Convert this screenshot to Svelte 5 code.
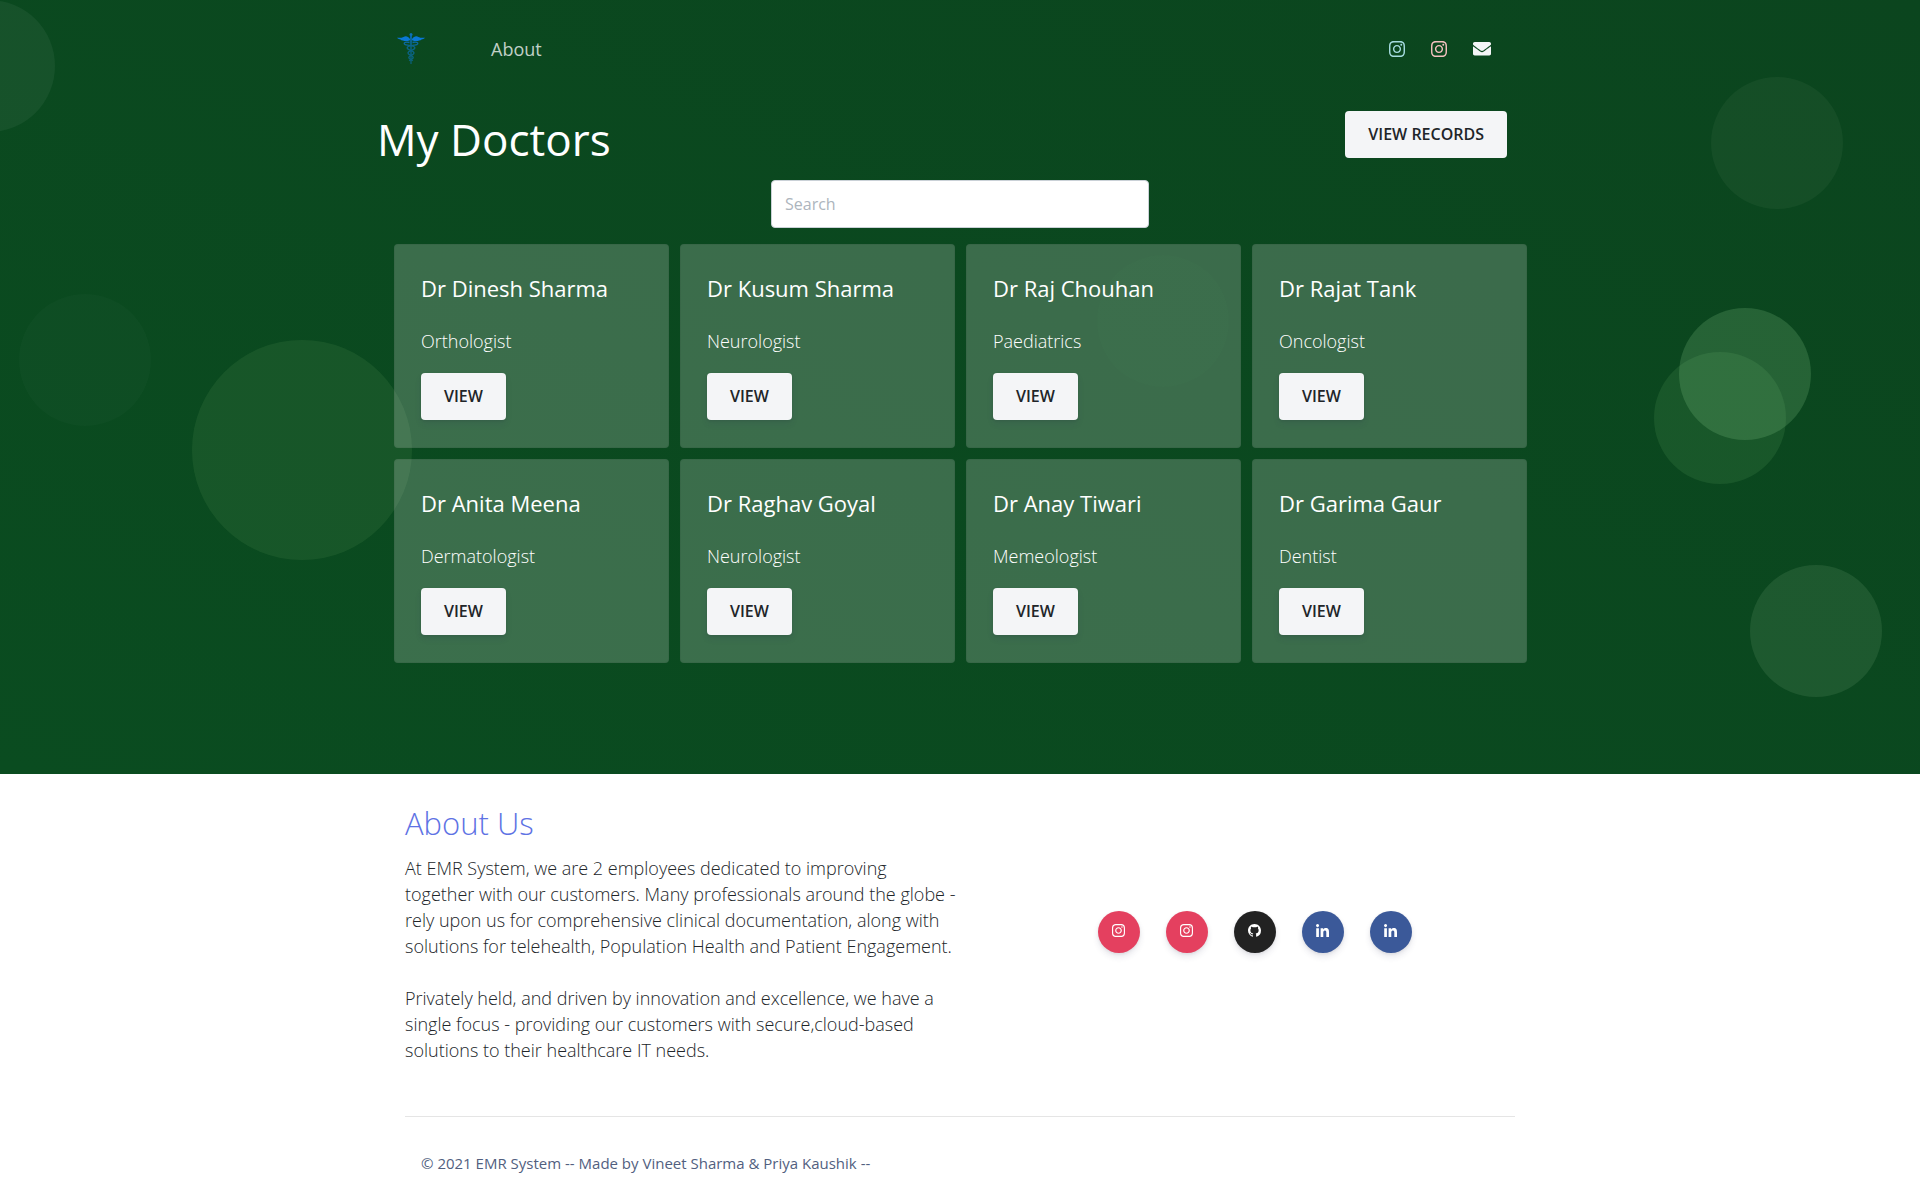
<script>
  const doctors = [
    { name: 'Dr Dinesh Sharma', field: 'Orthologist' },
    { name: 'Dr Kusum Sharma', field: 'Neurologist' },
    { name: 'Dr Raj Chouhan', field: 'Paediatrics' },
    { name: 'Dr Rajat Tank', field: 'Oncologist' },
    { name: 'Dr Anita Meena', field: 'Dermatologist' },
    { name: 'Dr Raghav Goyal', field: 'Neurologist' },
    { name: 'Dr Anay Tiwari', field: 'Memeologist' },
    { name: 'Dr Garima Gaur', field: 'Dentist' }
  ];

  const instagram = {
    box: '0 32 448 448',
    d: 'M224.1 141c-63.6 0-114.9 51.3-114.9 114.9s51.3 114.9 114.9 114.9S339 319.5 339 255.9 287.7 141 224.1 141zm0 189.6c-41.1 0-74.7-33.5-74.7-74.7s33.5-74.7 74.7-74.7 74.7 33.5 74.7 74.7-33.6 74.7-74.7 74.7zm146.4-194.3c0 14.9-12 26.8-26.8 26.8-14.9 0-26.8-12-26.8-26.8s12-26.8 26.8-26.8 26.8 12 26.8 26.8zm76.1 27.2c-1.7-35.9-9.9-67.7-36.2-93.9-26.2-26.2-58-34.4-93.9-36.2-37-2.1-147.9-2.1-184.9 0-35.8 1.7-67.6 9.9-93.9 36.1s-34.4 58-36.2 93.9c-2.1 37-2.1 147.9 0 184.9 1.7 35.9 9.9 67.7 36.2 93.9s58 34.4 93.9 36.2c37 2.1 147.9 2.1 184.9 0 35.9-1.7 67.7-9.9 93.9-36.2 26.2-26.2 34.4-58 36.2-93.9 2.1-37 2.1-147.8 0-184.8zM398.8 388c-7.8 19.6-22.9 34.7-42.6 42.6-29.5 11.7-99.5 9-132.1 9s-102.7 2.6-132.1-9c-19.6-7.8-34.7-22.9-42.6-42.6-11.7-29.5-9-99.5-9-132.1s-2.6-102.7 9-132.1c7.8-19.6 22.9-34.7 42.6-42.6 29.5-11.7 99.5-9 132.1-9s102.7-2.6 132.1 9c19.6 7.8 34.7 22.9 42.6 42.6 11.7 29.5 9 99.5 9 132.1s2.7 102.7-9 132.1z'
  };
  const github = {
    box: '0 0 16 16',
    d: 'M8 0C3.58 0 0 3.58 0 8c0 3.54 2.29 6.53 5.47 7.59.4.07.55-.17.55-.38 0-.19-.01-.82-.01-1.49-2.01.37-2.53-.49-2.69-.94-.09-.23-.48-.94-.82-1.13-.28-.15-.68-.52-.01-.53.63-.01 1.08.58 1.23.82.72 1.21 1.87.87 2.33.66.07-.52.28-.87.51-1.07-1.78-.2-3.64-.89-3.64-3.95 0-.87.31-1.59.82-2.15-.08-.2-.36-1.02.08-2.12 0 0 .67-.21 2.2.82.64-.18 1.32-.27 2-.27s1.36.09 2 .27c1.53-1.04 2.2-.82 2.2-.82.44 1.1.16 1.92.08 2.12.51.56.82 1.27.82 2.15 0 3.07-1.87 3.75-3.65 3.95.29.25.54.73.54 1.48 0 1.07-.01 1.93-.01 2.2 0 .21.15.46.55.38A8.01 8.01 0 0 0 16 8c0-4.42-3.58-8-8-8z'
  };
  const linkedin = {
    box: '0 0 448 448',
    d: 'M100.28 448H7.4V148.9h92.88zM53.79 108.1C24.09 108.1 0 83.5 0 53.8a53.79 53.79 0 0 1 107.58 0c0 29.7-24.1 54.3-53.79 54.3zM447.9 448h-92.68V302.4c0-34.7-.7-79.2-48.29-79.2-48.29 0-55.69 37.7-55.69 76.7V448h-92.78V148.9h89.08v40.8h1.3c12.4-23.5 42.69-48.3 87.88-48.3 94 0 111.28 61.9 111.28 142.3V448z'
  };

  const socials = [
    { label: 'Instagram', kind: 'instagram', icon: instagram },
    { label: 'Instagram', kind: 'instagram', icon: instagram },
    { label: 'GitHub', kind: 'github', icon: github },
    { label: 'LinkedIn', kind: 'linkedin', icon: linkedin },
    { label: 'LinkedIn', kind: 'linkedin', icon: linkedin }
  ];

  let query = $state('');
  const shown = $derived(
    doctors.filter((d) => d.name.toLowerCase().includes(query.toLowerCase()))
  );
</script>

{#snippet glyph(icon)}
  <svg class="glyph" viewBox={icon.box} aria-hidden="true"><path d={icon.d} /></svg>
{/snippet}

<section class="hero">
  <div class="shapes" aria-hidden="true">
    <span class="s1"></span>
    <span class="s2"></span>
    <span class="s3"></span>
    <span class="s4"></span>
    <span class="s5"></span>
    <span class="s6"></span>
    <span class="s7"></span>
    <span class="s8"></span>
  </div>

  <div class="container">
    <nav class="topbar">
      <a class="brand" href="#home" aria-label="EMR System">
        <svg viewBox="0 0 28 32" width="28" height="32" aria-hidden="true">
          <defs>
            <linearGradient id="fade" gradientUnits="userSpaceOnUse" x1="0" y1="0" x2="0" y2="32">
              <stop offset="0.2" stop-color="#0a70c0" />
              <stop offset="0.4" stop-color="#0a6488" />
              <stop offset="1" stop-color="#0a6078" />
            </linearGradient>
          </defs>
          <path
            fill="#0a78d6"
            d="M13 6C11 3 8.500 2.500 6.500 4C4.500 5 2.500 4.800 0 4.700C1 6 2.500 6.300 3.500 6.400C4 7.200 5 7.500 6 7.400C7 8.200 10 8.400 13 7.200ZM15 6C17 3 19.500 2.500 21.500 4C23.500 5 25.500 4.800 28 4.700C27 6 25.500 6.300 24.500 6.400C24 7.200 23 7.500 22 7.400C21 8.200 18 8.400 15 7.200Z"
          />
          <circle cx="14" cy="1.500" r="1.500" fill="#0b70bb" />
          <path fill="url(#fade)" d="M13.200 2.500H14.800L14.600 31H13.400Z" />
          <g fill="none" stroke="url(#fade)" stroke-width="1.400">
            <path d="M12.500 9.500C9 8.500 6.500 9.500 7.500 11.200C9 13.200 17.500 11.500 17.800 14.800C17.800 17.600 11 17 11 20C11 22.200 16.200 22 16.200 24.500C16.200 26.500 13 26 12.500 28" />
            <path d="M15.500 9.500C19 8.500 21.500 9.500 20.500 11.200C19 13.200 10.500 11.500 10.200 14.800C10.200 17.600 17 17 17 20C17 22.200 11.800 22 11.800 24.500C11.800 26.500 15 26 15.500 28" />
          </g>
        </svg>
      </a>
      <a class="nav-link" href="#about">About</a>
      <div class="nav-icons">
        <a class="blue" href="#instagram" aria-label="Instagram">{@render glyph(instagram)}</a>
        <a class="pink" href="#instagram-2" aria-label="Instagram">{@render glyph(instagram)}</a>
        <a class="mail" href="#mail" aria-label="Email">
          <svg viewBox="0 64 512 384" aria-hidden="true">
            <path d="M502.3 190.8c3.9-3.1 9.7-.2 9.700 4.700V400c0 26.500-21.500 48-48 48H48c-26.500 0-48-21.500-48-48V195.600c0-5 5.700-7.800 9.700-4.700 22.400 17.400 52.100 39.500 154.100 113.600 21.100 15.400 56.700 47.800 92.200 47.600 35.700.3 72-32.800 92.300-47.600 102-74.100 131.600-96.300 154-113.700zM256 320c23.200.4 56.600-29.200 73.400-41.400 132.700-96.300 142.800-104.700 173.400-128.700 5.800-4.500 9.200-11.500 9.200-18.900v-19c0-26.500-21.500-48-48-48H48c-26.500 0-48 21.500-48 48v19c0 7.400 3.400 14.300 9.200 18.900 30.600 23.900 40.700 32.400 173.400 128.700 16.800 12.200 50.200 41.800 73.400 41.400z" />
          </svg>
        </a>
      </div>
    </nav>

    <header class="title-row">
      <h1>My Doctors</h1>
      <button class="btn" type="button">VIEW RECORDS</button>
    </header>

    <input class="search" type="search" placeholder="Search" aria-label="Search" bind:value={query} />

    <div class="cards">
      {#each shown as doctor}
        <article class="card">
          <h2>{doctor.name}</h2>
          <p>{doctor.field}</p>
          <button class="btn raised" type="button">VIEW</button>
        </article>
      {/each}
    </div>
  </div>
</section>

<footer class="container footer" id="about">
  <div class="about">
    <div class="story">
      <h3>About Us</h3>
      <p>
        At EMR System, we are 2 employees dedicated to improving together with our customers. Many
        professionals around the globe - rely upon us for comprehensive clinical documentation,
        along with solutions for telehealth, Population Health and Patient Engagement.
      </p>
      <p>
        Privately held, and driven by innovation and excellence, we have a single focus - providing
        our customers with secure,cloud-based solutions to their healthcare IT needs.
      </p>
    </div>
    <div class="socials">
      {#each socials as social}
        <a class={social.kind} href="#{social.kind}" aria-label={social.label}>
          {@render glyph(social.icon)}
        </a>
      {/each}
    </div>
  </div>
  <hr />
  <div class="copyright">© 2021 EMR System -- Made by Vineet Sharma &amp; Priya Kaushik --</div>
</footer>

<style>
  :global(body) {
    margin: 0;
    background: #fff;
    font-family: 'Open Sans', sans-serif;
    color: #212529;
  }

  .container {
    box-sizing: border-box;
    position: relative;
    max-width: 1140px;
    margin: 0 auto;
  }

  .hero {
    position: relative;
    overflow: hidden;
    padding-bottom: 111px;
    background: linear-gradient(205deg, #0b451e, #0a4c20);
  }

  .shapes span {
    position: absolute;
    width: 132px;
    height: 132px;
    border-radius: 50%;
  }
  .shapes .s1 { left: -4%; top: 0; background: rgba(255, 255, 255, 0.05); }
  .shapes .s2 { left: 1%; top: 294px; background: rgba(255, 255, 255, 0.02); }
  .shapes .s3 { left: 10%; top: 340px; width: 220px; height: 220px; background: rgba(140, 190, 120, 0.11); }
  .shapes .s4 { right: 4%; top: 77px; background: rgba(220, 240, 200, 0.05); }
  .shapes .s5 { right: 7%; top: 352px; background: rgba(150, 220, 140, 0.11); }
  .shapes .s6 { right: 109px; top: 308px; background: rgba(160, 230, 160, 0.18); }
  .shapes .s7 { right: 2%; top: 565px; background: rgba(190, 230, 180, 0.11); }
  .shapes .s8 { right: 36%; top: 255px; background: rgba(120, 220, 80, 0.02); }

  .topbar {
    display: flex;
    align-items: center;
    height: 98px;
    padding: 0 39px 0 7px;
  }
  .brand {
    display: flex;
  }
  .nav-link {
    margin-left: 66px;
    color: rgba(255, 255, 255, 0.75);
    font-size: 18px;
    line-height: 26px;
    text-decoration: none;
  }
  .nav-icons {
    display: flex;
    align-items: center;
    gap: 26px;
    margin-left: auto;
  }
  .nav-icons a {
    display: flex;
    width: 16px;
  }
  .nav-icons .mail {
    width: 18px;
  }
  .nav-icons svg {
    width: 100%;
  }
  .blue { fill: #a5dbe0; }
  .pink { fill: #f3c0bf; }
  .mail { fill: #f4f5f7; }

  .title-row {
    display: flex;
    justify-content: space-between;
    align-items: flex-start;
    margin-left: -13px;
    padding: 13px 23px 0 0;
  }
  h1 {
    margin: 0;
    color: #fff;
    font-size: 44px;
    font-weight: 400;
    line-height: 56px;
  }

  .btn {
    padding: 12px 23px;
    border: 0;
    border-radius: 4px;
    background: #f4f5f7;
    color: #212529;
    font-family: inherit;
    font-size: 16px;
    font-weight: 600;
    line-height: 23px;
  }
  .raised {
    box-shadow: 0 4px 6px rgba(50, 50, 93, 0.11), 0 1px 3px rgba(0, 0, 0, 0.08);
  }

  .search {
    box-sizing: border-box;
    display: block;
    width: 378px;
    height: 48px;
    margin: 13px auto 16px;
    padding: 0 13px;
    border: 1px solid #cad1d7;
    border-radius: 4px;
    background: #fff;
    color: #212529;
    font-family: inherit;
    font-size: 16px;
  }
  .search::placeholder {
    color: #adb5bd;
  }

  .cards {
    display: grid;
    grid-template-columns: repeat(4, 1fr);
    gap: 11px;
    margin: 0 3px 0 4px;
  }
  .card {
    box-sizing: border-box;
    padding: 26px;
    border: 1px solid rgba(0, 0, 0, 0.05);
    border-radius: 4px;
    background: rgba(255, 255, 255, 0.2);
  }
  h2 {
    margin: 0 0 23px;
    color: #fff;
    font-size: 22px;
    font-weight: 400;
    line-height: 34px;
  }
  .card p {
    margin: 0 0 19px;
    color: #fff;
    font-size: 18px;
    font-weight: 300;
    line-height: 26px;
  }
  .card .btn {
    display: block;
    margin-bottom: 1px;
  }

  .footer {
    padding: 26px 15px;
  }
  .about {
    display: grid;
    grid-template-columns: 1fr 1fr;
  }
  h3 {
    margin: 0 0 9px;
    color: #5e72e4;
    font-size: 31px;
    font-weight: 300;
    line-height: 46px;
  }
  .story p {
    margin: 0 0 26px;
    font-size: 18px;
    font-weight: 300;
    line-height: 26px;
  }
  .socials {
    display: flex;
    justify-content: center;
    align-items: flex-start;
    gap: 26px;
    padding: 111px 0 0 34px;
  }
  .socials a {
    box-sizing: border-box;
    display: flex;
    justify-content: center;
    width: 42px;
    height: 42px;
    padding-top: 13px;
    border-radius: 50%;
    box-shadow: 0 4px 6px rgba(50, 50, 93, 0.11), 0 1px 3px rgba(0, 0, 0, 0.08);
    fill: #fff;
  }
  .socials svg {
    width: 13px;
    height: 13px;
  }
  .instagram { background: #e4405f; }
  .github { background: #222; }
  .linkedin { background: #3b5999; }

  hr {
    margin: 27px 0 33px;
    border: 0;
    border-top: 1px solid rgba(0, 0, 0, 0.1);
  }
  .copyright {
    padding-left: 16px;
    color: #525f7f;
    font-size: 15px;
    line-height: 26px;
  }
</style>
